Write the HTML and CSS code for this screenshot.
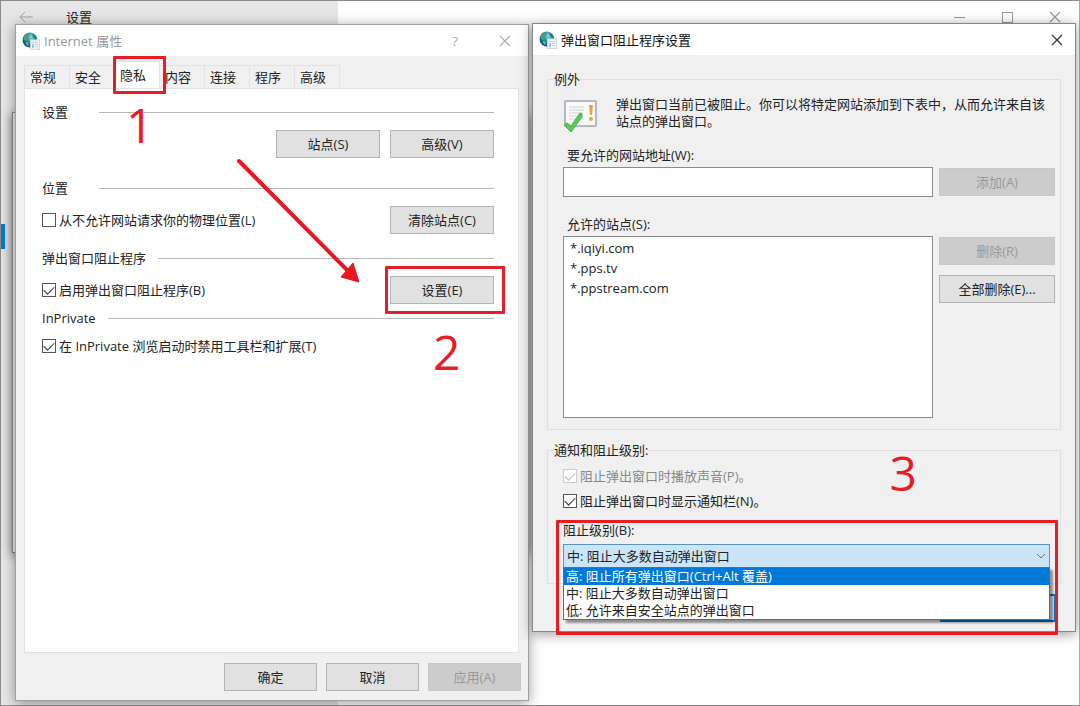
FILE: index.html
```html
<!DOCTYPE html>
<html lang="zh-CN">
<head>
    <meta charset="UTF-8">
    <meta name="viewport" content="width=device-width, initial-scale=1.0">
    <title>设置</title>
    <link rel="stylesheet" href="styles.css">
</head>
<body>
    <svg class="symbols" aria-hidden="true">
        <defs>
            <radialGradient id="globe-fill" cx="0.6" cy="0.3" r="0.8">
                <stop offset="0" stop-color="#8fd4f0"/>
                <stop offset="0.5" stop-color="#1f7fb8"/>
                <stop offset="1" stop-color="#0b2f6b"/>
            </radialGradient>
            <symbol id="globe" viewBox="0 0 18 18">
                <circle cx="8" cy="8" r="7.5" fill="url(#globe-fill)"/>
                <path d="M2 4 Q4 1 7 1.2 L8 3 L6 5 L6.500 7 L4 9 L1.500 7.500Z" fill="#3fa869"/>
                <path d="M10 2 L13 3 L15 7 L12 6.500 L11 5Z" fill="#1e8a4c"/>
                <path d="M3.500 10 L6.500 10.500 L6.500 14.500 Q4 13.500 3.500 10Z" fill="#5cc07a"/>
                <rect x="8.500" y="8" width="9" height="9.500" fill="#eef3f7" stroke="#d0d7dc"/>
                <path d="M10 10.500h6M13 12.500h3M13 14.500h3" stroke="#c3d0da"/>
                <rect x="10" y="12" width="2" height="4" fill="#a4c4dd"/>
            </symbol>
            <symbol id="cross" viewBox="0 0 12 12">
                <path d="M1 1 L11 11 M11 1 L1 11" fill="none" stroke="currentColor" stroke-width="1.200"/>
            </symbol>
        </defs>
    </svg>

    <div class="settings-window">
        <div class="settings-bar">
            <svg width="14" height="12" viewBox="0 0 14 12" fill="none" stroke="#a0a0a0"><path d="M14 6H1M6 1L1 6l5 5"/></svg>
            <span class="settings-title">设置</span>
            <svg width="12" height="12" viewBox="0 0 12 12" stroke="#999"><path d="M1 6.500h11"/></svg>
            <svg width="12" height="12" viewBox="0 0 12 12" fill="none" stroke="#999"><rect x="1.500" y="1.500" width="10" height="10"/></svg>
            <svg width="12" height="12"><use href="#cross"/></svg>
        </div>
        <div class="accent"></div>
        <div class="hidden-window"></div>
    </div>

    <main class="desktop">
        <section class="dialog inactive">
            <header class="title-bar">
                <svg width="18" height="18"><use href="#globe"/></svg>
                <h1>Internet 属性</h1>
                <button class="caption" type="button" aria-label="帮助">?</button>
                <button class="caption" type="button" aria-label="关闭"><svg width="12" height="12"><use href="#cross"/></svg></button>
            </header>
            <div class="properties">
                <div class="tabs" role="tablist">
                    <button role="tab">常规</button>
                    <button role="tab">安全</button>
                    <button role="tab" class="selected" aria-selected="true">隐私<span class="mark mark-tab"></span></button>
                    <button role="tab">内容</button>
                    <button role="tab">连接</button>
                    <button role="tab">程序</button>
                    <button role="tab">高级</button>
                </div>
                <div class="panel" role="tabpanel">
                    <h2>设置</h2>
                    <div class="row row-sites">
                        <button class="btn" type="button">站点(S)</button>
                        <button class="btn" type="button">高级(V)</button>
                    </div>
                    <h2>位置</h2>
                    <div class="row row-location">
                        <label class="check"><input type="checkbox">从不允许网站请求你的物理位置(L)</label>
                        <button class="btn" type="button">清除站点(C)</button>
                    </div>
                    <h2>弹出窗口阻止程序</h2>
                    <div class="row row-popup">
                        <label class="check"><input type="checkbox" checked>启用弹出窗口阻止程序(B)</label>
                        <div class="marked">
                            <button class="btn" type="button">设置(E)</button>
                            <span class="mark mark-button"></span>
                            <svg class="arrow" width="124" height="126" viewBox="0 0 124 126">
                                <path d="M3 3 L113 114" stroke="#ea1620" stroke-width="4" stroke-linecap="round"/>
                                <path d="M123 124 L105 119 L111 112 L117 105Z" fill="#ea1620" stroke="#ea1620" stroke-linejoin="round"/>
                            </svg>
                            <span class="step step-two">2</span>
                        </div>
                    </div>
                    <h2>InPrivate</h2>
                    <label class="check"><input type="checkbox" checked>在 InPrivate 浏览启动时禁用工具栏和扩展(T)</label>
                    <span class="step step-one">1</span>
                </div>
                <footer class="actions">
                    <button class="btn" type="button">确定</button>
                    <button class="btn" type="button">取消</button>
                    <button class="btn" type="button" disabled>应用(A)</button>
                </footer>
            </div>
        </section>

        <section class="dialog">
            <header class="title-bar">
                <svg width="18" height="18"><use href="#globe"/></svg>
                <h1>弹出窗口阻止程序设置</h1>
                <button class="caption" type="button" aria-label="关闭"><svg width="12" height="12"><use href="#cross"/></svg></button>
            </header>
            <form class="popup-body">
                <fieldset class="exceptions">
                    <legend>例外</legend>
                    <div class="intro">
                        <svg width="36" height="36" viewBox="0 0 36 36">
                            <rect x="2" y="2" width="31" height="25" rx="1" fill="#fafafa" stroke="#b4b8c2" stroke-width="2"/>
                            <path d="M6 8h15M6 11h15M6 14h14M6 17h11M6 20h8" stroke="#dde0e1" stroke-width="1.500"/>
                            <path d="M26 6h4l-1 10h-2z" fill="#f0a044"/>
                            <circle cx="28" cy="20" r="2" fill="#f0a044"/>
                            <path d="M1 26 L4 24 L8 27 L17 14 L19 15 L19 18 L8 33Z" fill="#5acb55" stroke="#3fb548"/>
                        </svg>
                        <p>弹出窗口当前已被阻止。你可以将特定网站添加到下表中，从而允许来自该站点的弹出窗口。</p>
                    </div>
                    <label class="field-label" for="address">要允许的网站地址(W):</label>
                    <div class="field">
                        <input type="text" id="address">
                        <button class="btn" type="button" disabled>添加(A)</button>
                    </div>
                    <label class="field-label sites-label" for="sites">允许的站点(S):</label>
                    <div class="field">
                        <select id="sites" size="8">
                            <option>*.iqiyi.com</option>
                            <option>*.pps.tv</option>
                            <option>*.ppstream.com</option>
                        </select>
                        <div class="field-buttons">
                            <button class="btn" type="button" disabled>删除(R)</button>
                            <button class="btn" type="button">全部删除(E)...</button>
                        </div>
                    </div>
                </fieldset>
                <fieldset class="level">
                    <legend>通知和阻止级别:</legend>
                    <label class="check"><input type="checkbox" checked disabled>阻止弹出窗口时播放声音(P)。</label>
                    <label class="check"><input type="checkbox" checked>阻止弹出窗口时显示通知栏(N)。</label>
                    <label class="level-label" for="level">阻止级别(B):</label>
                    <div class="combo">
                        <select id="level">
                            <option>中: 阻止大多数自动弹出窗口</option>
                        </select>
                        <svg class="chevron" width="10" height="6" viewBox="0 0 10 6" fill="none" stroke="#777"><path d="M1 1l4 4 4-4"/></svg>
                        <ul class="combo-list" role="listbox">
                            <li role="option" class="active" aria-selected="true">高: 阻止所有弹出窗口(Ctrl+Alt 覆盖)</li>
                            <li role="option">中: 阻止大多数自动弹出窗口</li>
                            <li role="option">低: 允许来自安全站点的弹出窗口</li>
                        </ul>
                        <span class="mark mark-combo"></span>
                        <span class="step step-three">3</span>
                    </div>
                </fieldset>
                <footer class="close-row">
                    <button class="btn default" type="button" aria-label="关闭"></button>
                </footer>
            </form>
        </section>
    </main>
</body>
</html>
```
FILE: styles.css
```css
* {
    box-sizing: border-box;
}

body {
    margin: 0;
    position: relative;
    font-family: "Open Sans", "Noto Sans CJK SC", sans-serif;
    font-size: 13px;
    line-height: 20px;
    color: #222;
    background-color: #fff;
}

button,
input,
select {
    font: inherit;
    color: inherit;
    margin: 0;
}

h1,
h2,
p,
ul {
    margin: 0;
    padding: 0;
    font-size: 13px;
    font-weight: normal;
}

.symbols {
    position: absolute;
    width: 0;
    height: 0;
}

/* window at the back of the desktop */
.settings-window {
    position: absolute;
    inset: 0;
    border: 1px solid #8c8c8c;
    border-right-color: #a5b0ae;
    background: linear-gradient(to right, #e6e6e6 337px, #fff 337px);
}

.settings-bar {
    display: flex;
    align-items: center;
    gap: 36px;
    height: 32px;
    padding: 0 18px;
    color: #999;
}

.settings-title {
    flex: 1;
    margin-left: -3px;
    color: #222;
}

.accent {
    position: absolute;
    left: 0;
    top: 223px;
    width: 4px;
    height: 25px;
    background-color: #0078d7;
}

.hidden-window {
    position: absolute;
    left: 11px;
    top: 111px;
    width: 48%;
    height: 441px;
    border: 1px solid #8c8c8c;
    background-color: #eee;
    box-shadow: 0 2px 10px rgba(0, 0, 0, 0.5);
}

.desktop {
    position: relative;
    display: grid;
    grid-template-columns: 514fr 544fr;
    align-items: start;
    gap: 3px;
    min-height: 100vh;
    padding: 23px 4px 5px 15px;
}

.dialog {
    display: flex;
    flex-direction: column;
    border: 1px solid #868686;
    background-color: #f0f0f0;
    box-shadow: 0 2px 12px rgba(0, 0, 0, 0.4);
}

.inactive {
    align-self: stretch;
    margin-top: 1px;
    border-color: #a0a0a0;
}

.title-bar {
    display: flex;
    align-items: center;
    gap: 4px;
    height: 31px;
    padding-left: 6px;
    background-color: #fff;
}

.title-bar h1 {
    flex: 1;
    color: #111;
}

.inactive .title-bar h1 {
    color: #999;
}

.caption {
    display: flex;
    justify-content: center;
    align-items: center;
    width: 36px;
    height: 30px;
    padding: 0;
    border: none;
    background: none;
    color: #333;
}

.inactive .caption {
    width: 46px;
    color: #aaa;
}

.btn {
    min-width: 104px;
    height: 28px;
    padding: 0 8px;
    border: 1px solid #b4b4b4;
    background-color: #e1e1e1;
}

.btn:disabled {
    border-color: #c8c8c8;
    background-color: #ccc;
    color: #999;
}

.check {
    display: flex;
    align-items: center;
    gap: 3px;
    height: 20px;
}

.check input {
    appearance: none;
    display: grid;
    width: 14px;
    height: 14px;
    border: 1px solid #555;
    background-color: #fff;
}

.check input:checked::before {
    content: "";
    width: 9px;
    height: 5px;
    margin: 2px 0 0 1px;
    border-left: 1px solid #333;
    border-bottom: 1px solid #333;
    transform: rotate(-45deg);
}

.check input:disabled {
    border-color: #ccc;
}

.check input:disabled::before {
    border-color: #bbb;
}

.check:has(input:disabled) {
    color: #888;
}

/* Internet properties */
.properties {
    flex: 1;
    display: flex;
    flex-direction: column;
    padding: 9px 9px 9px 8px;
}

.tabs {
    display: flex;
    height: 23px;
}

.tabs button {
    position: relative;
    padding: 0 13px 0 5px;
    border: solid #e2e2e2;
    border-width: 1px 1px 0 0;
    background: none;
}

.tabs button:first-child {
    border-left-width: 1px;
}

.tabs .selected {
    z-index: 1;
    margin-top: -4px;
    background-color: #fff;
}

.panel {
    position: relative;
    flex: 1;
    padding: 13px 24px 13px 17px;
    border: 1px solid #e2e2e2;
    background-color: #fff;
}

.panel h2 {
    display: grid;
    grid-template-columns: minmax(45px, auto) 1fr;
    gap: 12px;
    align-items: center;
    margin-bottom: 8px;
}

.panel h2::after {
    content: "";
    height: 1px;
    background-color: #b8b8b8;
}

.row {
    display: flex;
    justify-content: space-between;
    align-items: center;
}

.row-sites {
    justify-content: flex-end;
    gap: 10px;
    margin-bottom: 20px;
}

.row-location {
    margin-bottom: 14px;
}

.row-popup {
    margin-bottom: 4px;
}

.actions {
    display: flex;
    justify-content: flex-end;
    gap: 9px;
    margin: 10px -2px 0 0;
}

.actions .btn {
    min-width: 93px;
}

/* pop-up blocker settings */
.popup-body {
    display: flex;
    flex-direction: column;
    gap: 10px;
    padding: 14px 14px 9px;
}

fieldset {
    min-width: 0;
    margin: 0;
    border: 1px solid #e0e0e0;
}

legend {
    margin-left: -9px;
    padding: 0;
}

.exceptions {
    padding: 5px 5px 11px 15px;
}

.intro {
    display: flex;
    gap: 17px;
    margin-bottom: 10px;
}

.intro svg {
    flex: none;
    margin-top: 5px;
}

.intro p {
    line-height: 17px;
    padding-top: 2px;
}

.field-label {
    display: block;
    padding-left: 4px;
    margin-bottom: 2px;
}

.sites-label {
    margin-top: 17px;
}

.field {
    display: grid;
    grid-template-columns: 1fr 116px;
    align-items: center;
    gap: 6px;
}

.field input {
    min-width: 0;
    height: 30px;
    padding: 0 5px;
    border: 1px solid #8a8a8a;
    background-color: #fff;
}

.field select {
    min-width: 0;
    height: 182px;
    padding: 2px 0;
    border: 1px solid #8a8a8a;
    border-radius: 0;
    background-color: #fff;
}

.field option {
    height: 20px;
    padding: 0 6px;
}

.field-buttons {
    align-self: start;
    display: grid;
    gap: 10px;
    padding-top: 1px;
}

.level {
    padding: 6px 10px 15px 15px;
}

.level .check {
    margin-bottom: 5px;
}

.level-label {
    display: block;
    margin: 9px 0 4px;
}

.combo {
    position: relative;
}

.combo select {
    appearance: none;
    display: block;
    width: 100%;
    height: 24px;
    padding: 0 3px;
    border: 1px solid #5a93bd;
    border-radius: 0;
    background-color: #cce4f7;
}

.chevron {
    position: absolute;
    right: 4px;
    top: 9px;
}

.combo-list {
    position: absolute;
    z-index: 1;
    top: 23px;
    left: 0;
    right: 0;
    list-style: none;
    line-height: 17px;
    border: 1px solid #1c7fc9;
    background-color: #fff;
    box-shadow: 3px 3px 2px rgba(0, 0, 0, 0.4);
}

.combo-list li {
    padding: 0 2px;
}

.combo-list .active {
    color: #fff;
    background-color: #0078d7;
}

.close-row {
    display: flex;
    justify-content: flex-end;
    padding-right: 5px;
}

.btn.default {
    min-width: 116px;
    border: 2px solid #0078d7;
}

/* red guide marks */
.mark {
    position: absolute;
    border: 3px solid #e81c24;
    border-radius: 1px;
    pointer-events: none;
}

.mark-tab {
    inset: -6px -7px -6px -2px;
}

.marked {
    position: relative;
}

.mark-button {
    inset: -10px -11px -10px -5px;
}

.mark-combo {
    z-index: 2;
    inset: -24px -8px -67px -7px;
}

.arrow {
    position: absolute;
    right: 134px;
    top: -118px;
}

.step {
    position: absolute;
    font-size: 48px;
    line-height: 48px;
    color: #e81c24;
}

.step-one {
    left: 101px;
    top: 12px;
}

.step-two {
    left: 43px;
    top: 52px;
}

.step-three {
    right: 133px;
    top: -95px;
}
```
